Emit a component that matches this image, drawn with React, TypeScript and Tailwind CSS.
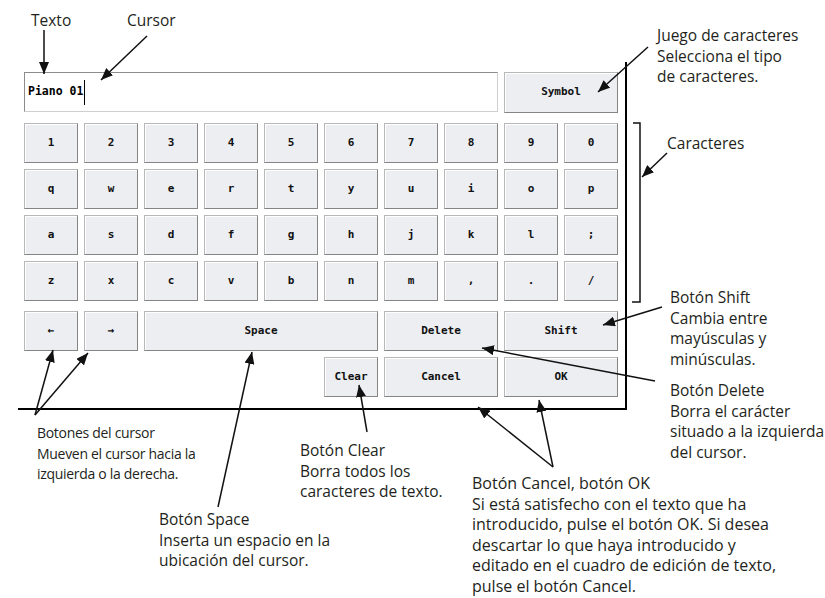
import React from "react";

const charRows: string[][] = [
  ["1", "2", "3", "4", "5", "6", "7", "8", "9", "0"],
  ["q", "w", "e", "r", "t", "y", "u", "i", "o", "p"],
  ["a", "s", "d", "f", "g", "h", "j", "k", "l", ";"],
  ["z", "x", "c", "v", "b", "n", "m", ",", ".", "/"],
];

const callouts = [
  { x: 31, y: 10, size: "text-[15.5px]", lines: ["Texto"] },
  { x: 127, y: 10, size: "text-[15.5px]", lines: ["Cursor"] },
  { x: 657, y: 25, size: "text-[15.5px]", lines: ["Juego de caracteres", "Selecciona el tipo", "de caracteres."] },
  { x: 667, y: 133, size: "text-[15.5px]", lines: ["Caracteres"] },
  { x: 670, y: 287, size: "text-[15.5px]", lines: ["Botón Shift", "Cambia entre", "mayúsculas y", "minúsculas."] },
  { x: 670, y: 380, size: "text-[15.5px]", lines: ["Botón Delete", "Borra el carácter", "situado a la izquierda", "del cursor."] },
  { x: 37, y: 423, size: "text-[14px] tracking-[-0.3px]", lines: ["Botones del cursor", "Mueven el cursor hacia la", "izquierda o la derecha."] },
  { x: 300, y: 440, size: "text-[15.5px]", lines: ["Botón Clear", "Borra todos los", "caracteres de texto."] },
  { x: 159, y: 509, size: "text-[15.5px]", lines: ["Botón Space", "Inserta un espacio en la", "ubicación del cursor."] },
  {
    x: 472,
    y: 473,
    size: "text-[16px]",
    lines: [
      "Botón Cancel, botón OK",
      "Si está satisfecho con el texto que ha",
      "introducido, pulse el botón OK. Si desea",
      "descartar lo que haya introducido y",
      "editado en el cuadro de edición de texto,",
      "pulse el botón Cancel.",
    ],
  },
];

// [x1, y1, x2 (tip), y2 (tip)]
const arrows: number[][] = [
  [44, 30, 44, 74],
  [147, 36, 101, 80],
  [648, 47, 598, 92],
  [667, 153, 642, 177],
  [662, 307, 603, 325],
  [655, 381, 482, 348],
  [367, 432, 359, 385],
  [218, 507, 252, 352],
  [35, 415, 53, 350],
  [35, 415, 88, 353],
  [553, 467, 478, 407],
  [553, 467, 539, 400],
];

const KeyButton = ({ label, className = "" }: { label: string; className?: string }) => (
  <div
    className={`h-10 flex items-center justify-center bg-[#eceef2] border border-[#b8b8b8] border-b-[#858585] border-r-[#858585] shadow-[inset_1px_1px_0_#ffffff] text-[11px] font-bold text-[#111] ${className}`}
  >
    {label}
  </div>
);

const Keyboard = () => (
  <div className="ml-[18px] mt-[62px] w-[609px] h-[348px] border-r-2 border-b-2 border-black pl-[6px] pt-[10px]">
    <div className="w-[594px] grid grid-cols-10 gap-x-[6px] font-['DejaVu_Sans_Mono',monospace]">
      <div className="col-span-8 h-10 bg-white border border-[#8c8c8c] border-b-[#cfcfcf] border-r-[#cfcfcf] flex items-center pl-[3px] text-[11.5px] font-bold text-black">
        Piano 01
        <span className="ml-[1px] w-px h-[25px] bg-black" />
      </div>
      <KeyButton label="Symbol" className="col-span-2 h-[41px]" />

      <div className="col-span-10 mt-[10px] grid grid-cols-10 gap-x-[6px] gap-y-[6px]">
        {charRows.flat().map((c, i) => (
          <KeyButton key={i} label={c} />
        ))}
      </div>

      <div className="col-span-10 mt-[10px] grid grid-cols-10 gap-x-[6px] gap-y-[6px]">
        <KeyButton label="←" />
        <KeyButton label="→" />
        <KeyButton label="Space" className="col-span-4" />
        <KeyButton label="Delete" className="col-span-2" />
        <KeyButton label="Shift" className="col-span-2" />
        <div className="col-span-5" />
        <KeyButton label="Clear" />
        <KeyButton label="Cancel" className="col-span-2" />
        <KeyButton label="OK" className="col-span-2" />
      </div>
    </div>
  </div>
);

const App = () => {
  return (
    <div className="relative w-[825px] h-[598px] bg-white overflow-hidden">
      <Keyboard />

      {/* callout texts */}
      {callouts.map((c, i) => (
        <div
          key={i}
          className={`absolute font-['Open_Sans',sans-serif] leading-[20.5px] text-[#231f20] whitespace-nowrap ${c.size}`}
          style={{ left: c.x, top: c.y }}
        >
          {c.lines.map((l, j) => (
            <div key={j}>{l}</div>
          ))}
        </div>
      ))}

      {/* leader lines */}
      <svg className="absolute inset-0 pointer-events-none" width={825} height={598} viewBox="0 0 825 598">
        <defs>
          <marker id="head" viewBox="0 0 12 10" refX="12" refY="5" markerWidth="12" markerHeight="10" markerUnits="userSpaceOnUse" orient="auto">
            <path d="M0 0 L12 5 L0 10 Z" fill="#111" />
          </marker>
        </defs>
        {arrows.map(([x1, y1, x2, y2], i) => (
          <line key={i} x1={x1} y1={y1} x2={x2} y2={y2} stroke="#111" strokeWidth={1.5} markerEnd="url(#head)" />
        ))}
        <path d="M633 123 H640 V302 H632" fill="none" stroke="#111" strokeWidth={1.5} />
      </svg>
    </div>
  );
};

export default App;
